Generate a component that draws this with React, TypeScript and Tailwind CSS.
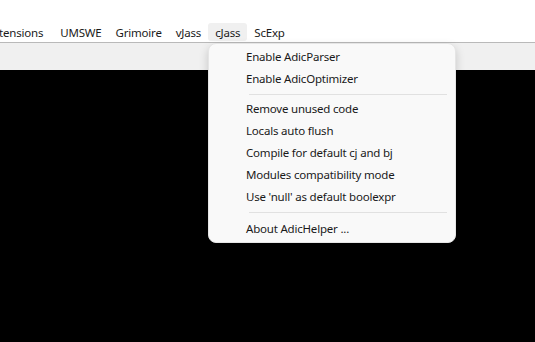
const menuBar = ['Extensions', 'UMSWE', 'Grimoire', 'vJass', 'cJass', 'ScExp'];

type Entry = { label: string } | { sep: 'a' | 'b' };

const entries: Entry[] = [
  { label: 'Enable AdicParser' },
  { label: 'Enable AdicOptimizer' },
  { sep: 'a' },
  { label: 'Remove unused code' },
  { label: 'Locals auto flush' },
  { label: 'Compile for default cj and bj' },
  { label: 'Modules compatibility mode' },
  { label: "Use 'null' as default boolexpr" },
  { sep: 'b' },
  { label: 'About AdicHelper ...' },
];

export default function App() {
  return (
    <div
      className="relative w-[535px] h-[342px] overflow-hidden bg-black flex flex-col text-[11.5px] tracking-[-0.2px] text-[#1a1a1a]"
      style={{ fontFamily: '"Segoe UI", "Noto Sans", sans-serif' }}
    >
      {/* window top */}
      <div className="h-[22px] bg-white" />

      <div className="h-[20px] bg-white flex items-center -ml-[20px]">
        {menuBar.map((m, i) => (
          <div
            key={m}
            className={`h-[18px] flex items-center pt-[2px] pl-[7px] rounded-[3px] ${i === 0 ? 'pr-[10px]' : 'pr-[7px]'} ${m === 'cJass' ? 'bg-[#f0f0f0]' : ''}`}
          >
            {m}
          </div>
        ))}
      </div>

      <div className="h-px bg-[#b9b9b9]" />
      <div className="h-[27px] bg-[#f0f0f0]" />
      <div className="flex-1 bg-black" />

      {/* cJass dropdown */}
      <div className="absolute left-[208px] top-[43px] w-[248px] bg-[#f9f9f9] rounded-[8px] border border-[#e5e5e5] shadow-[0_4px_10px_rgba(0,0,0,0.18)] py-[2px]">
        {entries.map((e, i) =>
          'sep' in e ? (
            <div
              key={i}
              className={`ml-[40px] mr-[8px] h-px bg-[#e1e1e1] ${e.sep === 'a' ? 'mt-[4px] mb-[3px]' : 'mt-[4px] mb-[5px]'}`}
            />
          ) : (
            <div key={i} className="h-[22px] flex items-center pl-[37px] whitespace-nowrap">
              {e.label}
            </div>
          )
        )}
      </div>
    </div>
  );
}
